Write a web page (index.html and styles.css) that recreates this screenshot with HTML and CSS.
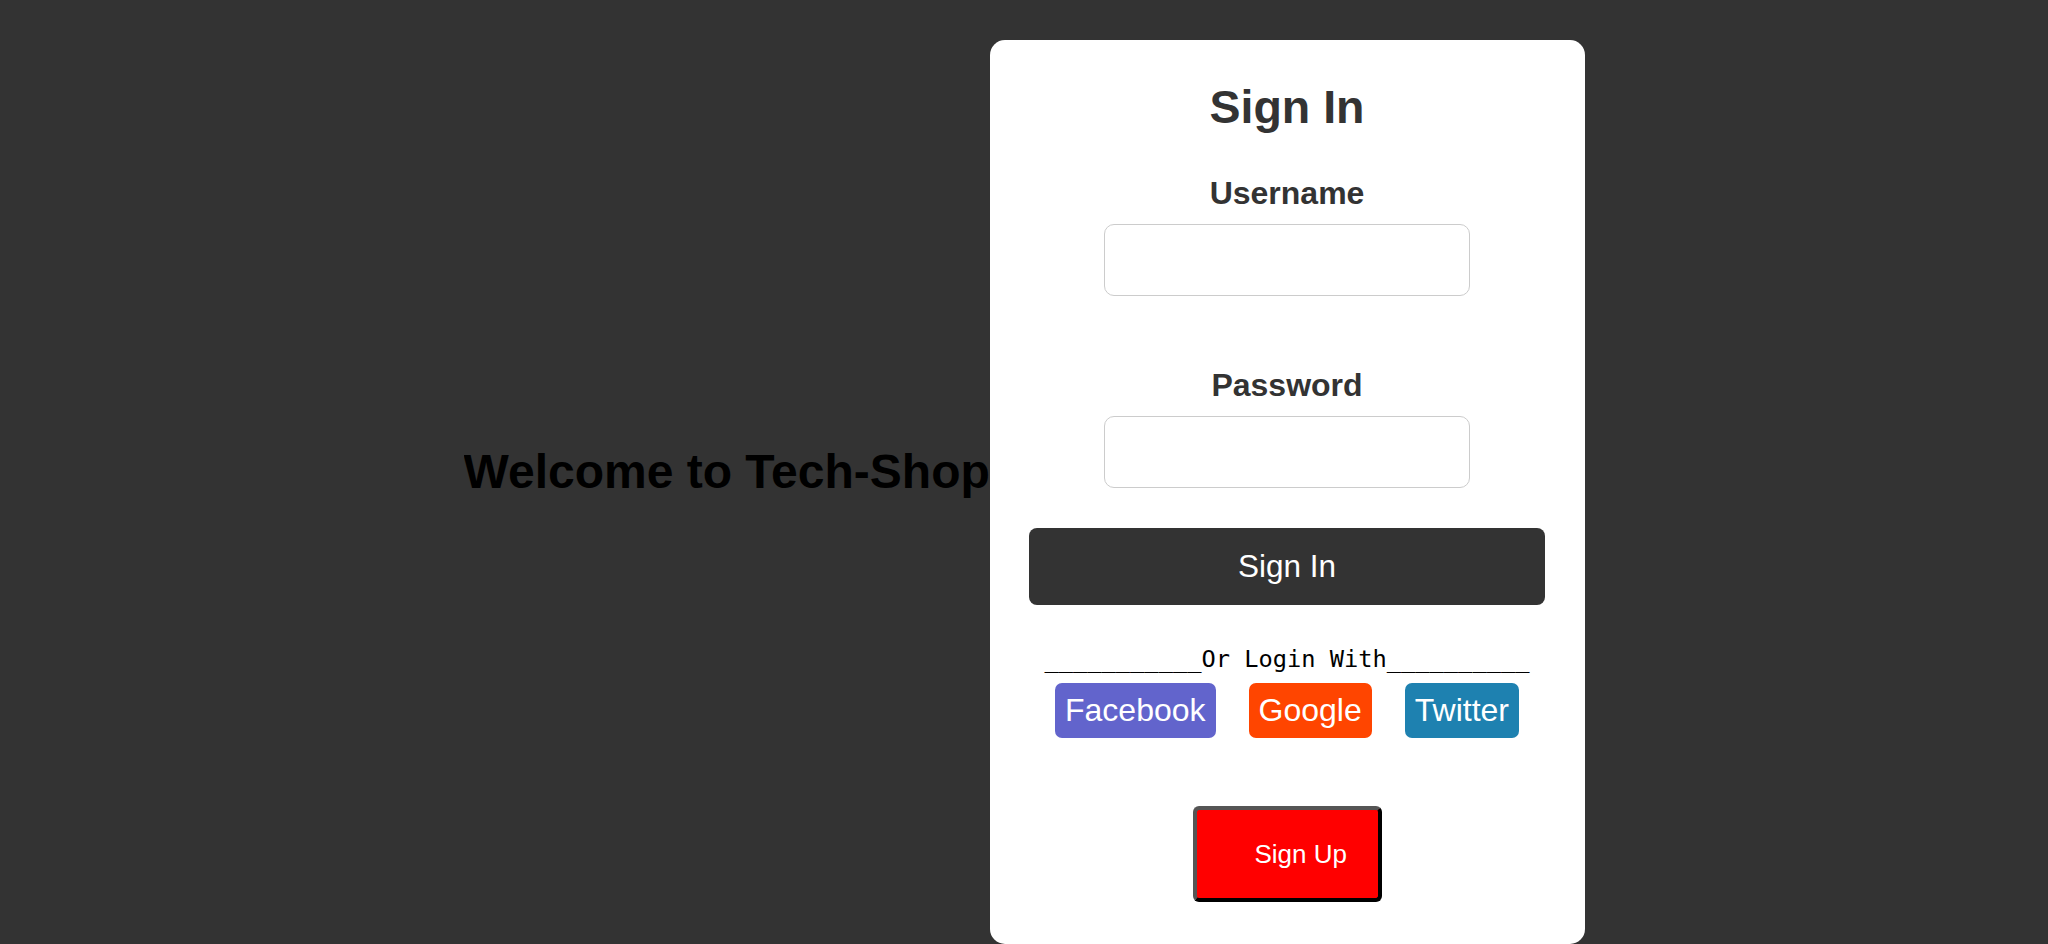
FILE: index.html
```html
<!DOCTYPE html>
<html lang="en">
<head>
<meta charset="utf-8">
<title>Tech-Shop Sign In</title>
<link rel="stylesheet" href="styles.css">
</head>
<body>
<div class="page">
  <h1 class="welcome">Welcome to Tech-Shop</h1>
  <form class="card" onsubmit="return false;">
    <h2 class="card-title">Sign In</h2>
    <label class="field-label" for="username">Username</label>
    <input class="field-input" id="username" type="text">
    <label class="field-label field-label-second" for="password">Password</label>
    <input class="field-input" id="password" type="password">
    <button class="signin-btn" type="submit">Sign In</button>
    <p class="divider">___________Or Login With__________</p>
    <div class="socials">
      <button class="social social-facebook" type="button">Facebook</button>
      <button class="social social-google" type="button">Google</button>
      <button class="social social-twitter" type="button">Twitter</button>
    </div>
    <button class="signup-btn" type="button">Sign Up</button>
  </form>
</div>
</body>
</html>
```
FILE: styles.css
```css
html, body {
  margin: 0;
  padding: 0;
  background: #333333;
}

body {
  font-family: "Liberation Sans", Arial, sans-serif;
}

.page {
  display: flex;
  justify-content: center;
  align-items: center;
  min-height: 944px;
}

.welcome {
  margin: 0;
  font-size: 48px;
  line-height: 56px;
  font-weight: bold;
  color: #000000;
  white-space: nowrap;
  width: 526px;
  overflow: hidden;
}

.card {
  align-self: flex-start;
  margin: 40px 0 0 0;
  width: 595px;
  box-sizing: border-box;
  background: #ffffff;
  border-radius: 15px;
  padding: 40px 40px 42px;
  display: flex;
  flex-direction: column;
  align-items: center;
}

.card-title {
  margin: 0;
  font-size: 46.5px;
  line-height: 54px;
  font-weight: bold;
  color: #333333;
}

.field-label {
  display: block;
  margin-top: 41px;
  font-size: 32px;
  line-height: 36px;
  font-weight: bold;
  color: #333333;
}

.field-label-second {
  margin-top: 71px;
}

.field-input {
  margin-top: 13px;
  width: 366px;
  height: 72px;
  box-sizing: border-box;
  border: 1px solid #cccccc;
  border-radius: 10px;
  background: #ffffff;
  font-size: 24px;
  padding: 0 12px;
  outline: none;
}

.signin-btn {
  margin-top: 40px;
  width: 516px;
  height: 77px;
  border: none;
  border-radius: 8px;
  background: #333333;
  color: #ffffff;
  font-family: "Liberation Sans", Arial, sans-serif;
  font-size: 31.5px;
  padding: 0;
}

.divider {
  margin: 40px 0 0;
  font-family: "DejaVu Sans Mono", monospace;
  font-size: 23.7px;
  line-height: 28px;
  color: #000000;
  white-space: nowrap;
}

.socials {
  margin-top: 10px;
  display: flex;
  gap: 33px;
}

.social {
  height: 55px;
  border: none;
  border-radius: 7px;
  padding: 0 10px;
  color: #ffffff;
  font-family: "Liberation Sans", Arial, sans-serif;
  font-size: 32px;
}

.social-facebook { background: #6264cc; }
.social-google { background: #ff4500; }
.social-twitter { background: #1e81b0; }

.signup-btn {
  margin-top: 68px;
  width: 189px;
  height: 96px;
  box-sizing: border-box;
  border-style: solid;
  border-width: 4px;
  border-color: #555555 #000000 #000000 #555555;
  border-radius: 6px;
  background: #ff0000;
  color: #ffffff;
  font-family: "Liberation Sans", Arial, sans-serif;
  font-size: 26px;
  text-align: left;
  padding: 0 0 0 58px;
}
```
